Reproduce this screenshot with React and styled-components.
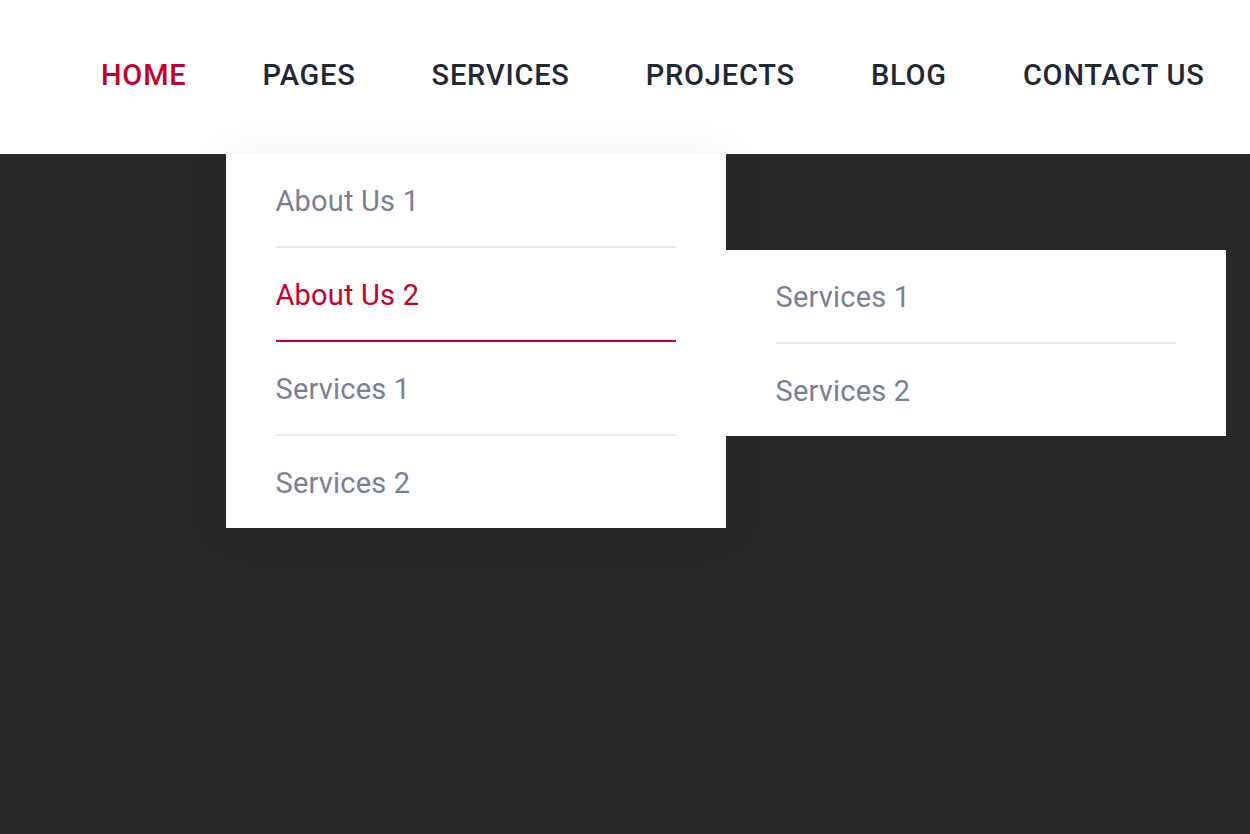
import React from "react";
import styled, { createGlobalStyle } from "styled-components";

const GlobalStyle = createGlobalStyle`
  html, body {
    margin: 0;
    padding: 0;
    background: #282828;
  }
  body {
    font-family: Roboto, "Liberation Sans", sans-serif;
    -webkit-font-smoothing: antialiased;
  }
`;

const Page = styled.div`
  width: 1250px;
  height: 834px;
  background: #282828;
  overflow: hidden;
`;

const Header = styled.header`
  position: relative;
  z-index: 2;
  height: 155px;
  background: #fff;
  border-bottom: 1px solid #27333c;
  box-sizing: border-box;
`;

const Nav = styled.ul`
  display: flex;
  align-items: stretch;
  gap: 76px;
  height: 100%;
  margin: 0;
  padding: 0 0 4px 101px;
  box-sizing: border-box;
  list-style: none;
`;

const NavItem = styled.li`
  position: relative;
  display: flex;
  align-items: center;
  font-size: 29px;
  font-weight: 500;
  letter-spacing: 0.8px;
  color: ${(p) => (p.$active ? "#c6002f" : "#1f2934")};
  cursor: pointer;
`;

const Dropdown = styled.ul`
  position: absolute;
  top: 154px;
  left: -37px;
  width: 500px;
  margin: 0;
  padding: 0 50px;
  box-sizing: border-box;
  list-style: none;
  background: #fff;
  letter-spacing: 0.2px;
  box-shadow: 0 0 45px rgba(0, 0, 0, 0.06);
`;

const SubMenu = styled(Dropdown)`
  top: 2px;
  left: calc(100% + 50px);
  box-shadow: none;
`;

const MenuItem = styled.li`
  position: relative;
  padding: 33px 0 31px;
  line-height: 28px;
  font-size: 29px;
  font-weight: 400;
  color: ${(p) => (p.$active ? "#c6002f" : "#7b8095")};
  border-bottom: 2px solid ${(p) => (p.$active ? "#c6002f" : "#e8e8ea")};

  &:last-child {
    border-bottom: none;
  }
`;

const navLinks = ["HOME", "PAGES", "SERVICES", "PROJECTS", "BLOG", "CONTACT US"];

export default function App() {
  return (
    <Page>
      <GlobalStyle />
      <Header>
        <Nav>
          {navLinks.map((label, i) => (
            <NavItem key={label} $active={i === 0}>
              {label}
              {label === "PAGES" && (
                <Dropdown>
                  <MenuItem>About Us 1</MenuItem>
                  <MenuItem $active>
                    About Us 2
                    <SubMenu>
                      <MenuItem>Services 1</MenuItem>
                      <MenuItem>Services 2</MenuItem>
                    </SubMenu>
                  </MenuItem>
                  <MenuItem>Services 1</MenuItem>
                  <MenuItem>Services 2</MenuItem>
                </Dropdown>
              )}
            </NavItem>
          ))}
        </Nav>
      </Header>
    </Page>
  );
}
